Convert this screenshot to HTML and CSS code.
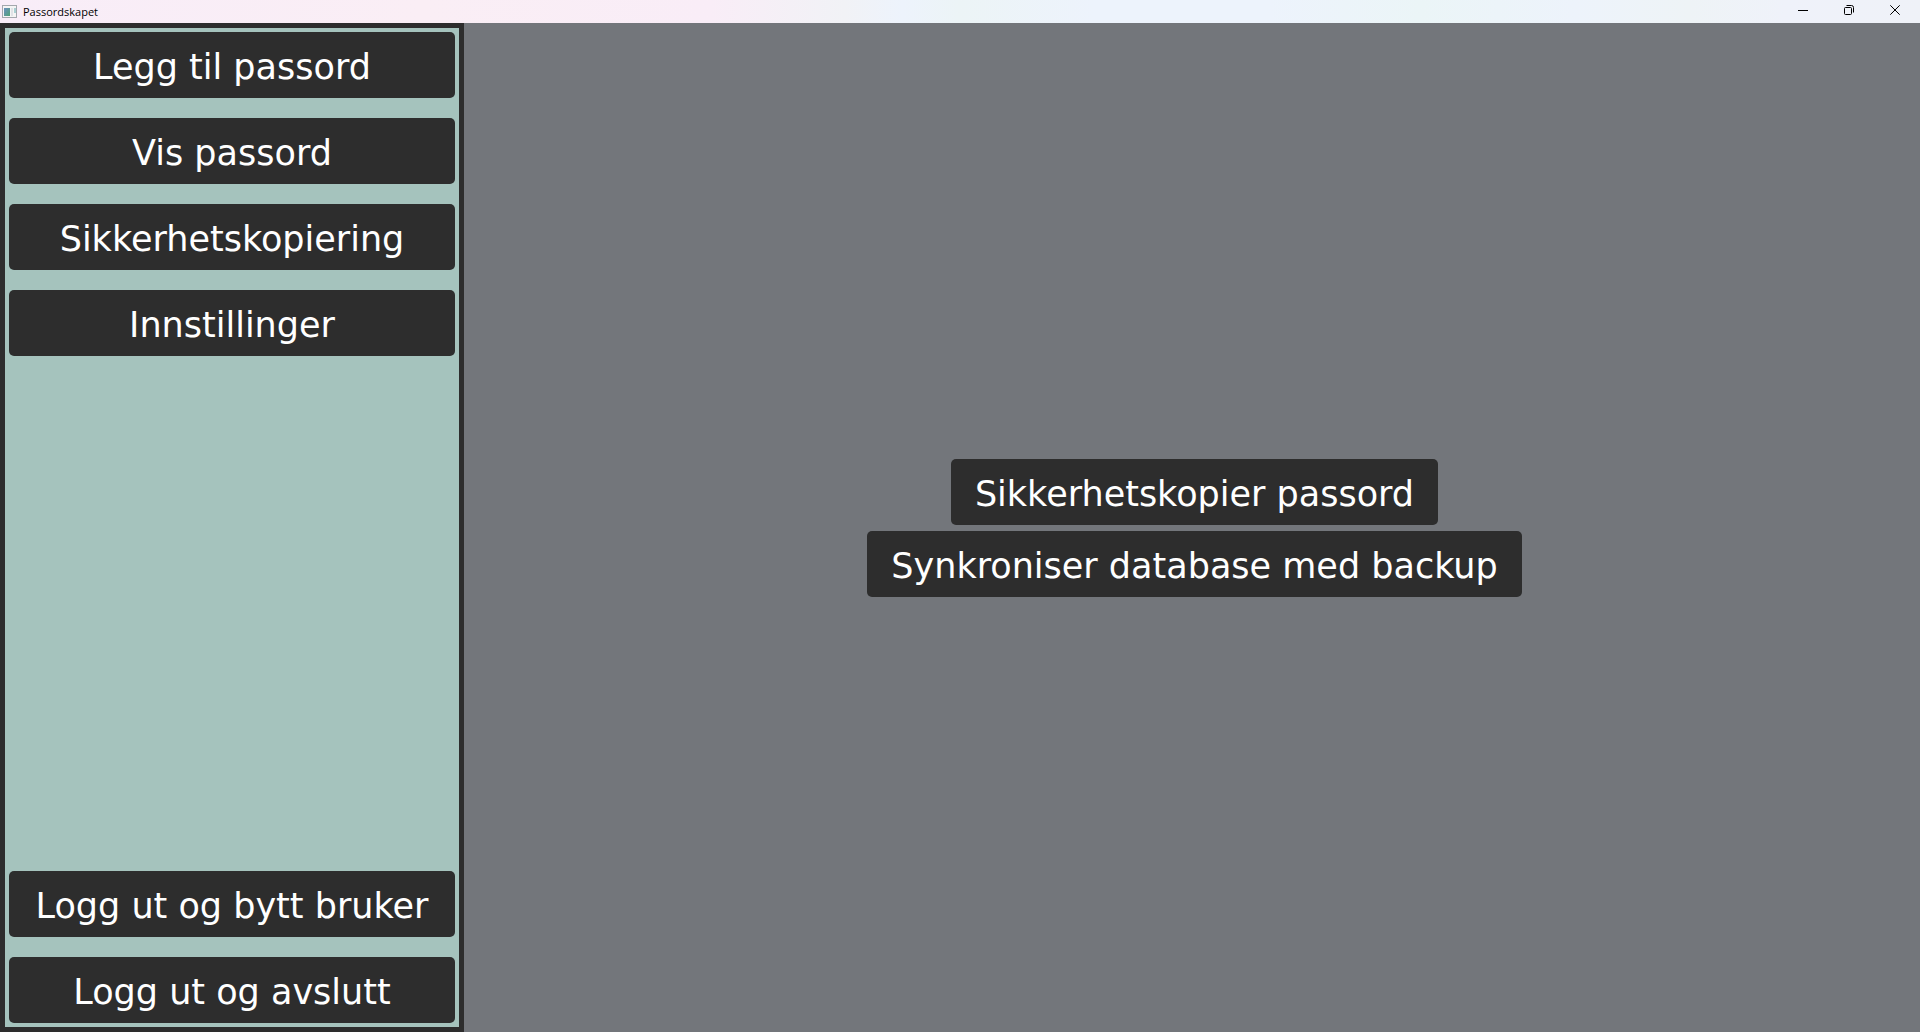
FILE: index.html
```html
<!DOCTYPE html>
<html lang="nb">
<head>
<meta charset="utf-8">
<title>Passordskapet</title>
<link rel="stylesheet" href="styles.css">
</head>
<body>
<header class="titlebar">
  <svg class="app-icon" width="15" height="14" viewBox="0 0 15 14" aria-hidden="true">
    <defs>
      <linearGradient id="pane" x1="0" y1="0" x2="1" y2="1">
        <stop offset="0" stop-color="#6c8fc0"/>
        <stop offset="1" stop-color="#4fa277"/>
      </linearGradient>
    </defs>
    <rect x="0.5" y="0.5" width="14" height="12" fill="#f4f4f4" stroke="#a3a7ad"/>
    <rect x="2" y="3" width="6" height="8" fill="url(#pane)"/>
    <rect x="9" y="3" width="2" height="8" fill="#e0e2e6"/>
    <rect x="12" y="3" width="2" height="5" fill="#a9cfd2"/>
  </svg>
  <span class="title">Passordskapet</span>
  <div class="window-controls">
    <button class="window-button" type="button" aria-label="Minimer">
      <svg width="10" height="10" viewBox="0 0 10 10"><path d="M0 5.500H10" stroke="#000" fill="none"/></svg>
    </button>
    <button class="window-button" type="button" aria-label="Gjenopprett">
      <svg width="10" height="10" viewBox="0 0 10 10"><g stroke="#000" fill="none"><rect x="0.500" y="2.500" width="7" height="7" rx="1"/><path d="M2.500 0.500H7.500Q9.500 0.500 9.500 2.500V7.500"/></g></svg>
    </button>
    <button class="window-button" type="button" aria-label="Lukk">
      <svg width="10" height="10" viewBox="0 0 10 10"><path d="M0.300 0.300L9.700 9.700M9.700 0.300L0.300 9.700" stroke="#000" fill="none"/></svg>
    </button>
  </div>
</header>
<div class="workspace">
  <nav class="sidebar">
    <div class="menu">
      <button class="button" type="button">Legg til passord</button>
      <button class="button" type="button">Vis passord</button>
      <button class="button" type="button">Sikkerhetskopiering</button>
      <button class="button" type="button">Innstillinger</button>
    </div>
    <div class="menu">
      <button class="button" type="button">Logg ut og bytt bruker</button>
      <button class="button" type="button">Logg ut og avslutt</button>
    </div>
  </nav>
  <main class="content">
    <button class="button" type="button">Sikkerhetskopier passord</button>
    <button class="button" type="button">Synkroniser database med backup</button>
  </main>
</div>
</body>
</html>
```
FILE: styles.css
```css
* {
  box-sizing: border-box;
}

body {
  margin: 0;
  min-height: 100vh;
  display: flex;
  flex-direction: column;
  font-family: Verdana, "DejaVu Sans", sans-serif;
}

.titlebar {
  display: flex;
  align-items: center;
  height: 23px;
  padding: 0 2px;
  gap: 6px;
  background: linear-gradient(90deg, #f8edf8 0%, #faeef5 22%, #f9edf7 37%, #f1f2f6 44%, #edf3fc 47%, #ecf4f6 50%, #edf3fc 57%, #edf3fc 66%, #ebf5f7 74%, #edf3fb 82%, #eef3f6 88%, #eff2fa 93%, #eff2f8 100%);
}

.title {
  font: 11px/16px "Segoe UI", "Open Sans", sans-serif;
  color: #000;
}

.window-controls {
  display: flex;
  align-self: stretch;
  margin-left: auto;
}

.window-button {
  display: flex;
  align-items: center;
  justify-content: center;
  width: 46px;
  padding: 0 0 3px;
  border: 0;
  background: transparent;
}

.workspace {
  flex: 1;
  display: flex;
}

.sidebar {
  flex: none;
  width: 464px;
  display: flex;
  flex-direction: column;
  justify-content: space-between;
  gap: 20px;
  padding: 4px;
  border: 5px solid #2d2d2d;
  background: #a5c3bd;
}

.menu {
  display: flex;
  flex-direction: column;
  gap: 20px;
}

.content {
  flex: 1;
  display: flex;
  flex-direction: column;
  align-items: center;
  justify-content: center;
  gap: 6px;
  padding-left: 5px;
  background: #73767b;
}

.button {
  height: 66px;
  padding: 4px 24px 0;
  border: 0;
  border-radius: 5px;
  background: #2d2d2d;
  color: #fff;
  font: 35px/40px Verdana, "DejaVu Sans", sans-serif;
  white-space: nowrap;
}
```
